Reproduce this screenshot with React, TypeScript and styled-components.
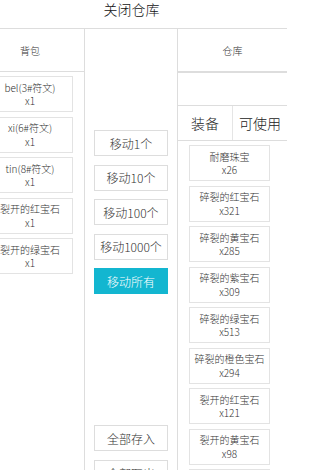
import styled, { createGlobalStyle } from 'styled-components';

const GlobalStyle = createGlobalStyle`
  body {
    margin: 0;
    overflow: hidden;
    background: #fff;
    color: #333;
    font-family: "Noto Sans CJK SC", "Noto Sans", sans-serif;
    font-weight: 300;
  }
`;

const Page = styled.div`
  width: 311px;
  margin-left: -24px;
`;

const TitleBar = styled.div`
  height: 28px;
  border-bottom: 1px solid #ddd;
  text-align: center;
  font-size: 14px;
  line-height: 18px;
  color: #111;
`;

const Columns = styled.div`
  display: grid;
  grid-template-columns: 109px 93px 109px;
  height: 470px;
`;

const Panel = styled.div<{ $divider?: boolean }>`
  display: flex;
  flex-direction: column;
  min-width: 0;
  overflow: hidden;
  border-right: ${(p) => (p.$divider ? '1px solid #ddd' : 'none')};
`;

const PanelHeader = styled.div`
  height: 42px;
  flex-shrink: 0;
  display: flex;
  align-items: center;
  justify-content: center;
  border-bottom: 1px solid #ddd;
  font-size: 10px;
`;

const SearchInput = styled.input`
  box-sizing: border-box;
  flex-shrink: 0;
  height: 34px;
  width: 100%;
  border: none;
  border-top: 1px solid #ddd;
  border-bottom: 1px solid #ddd;
  outline: none;
  padding: 0 6px;
`;

const TabRow = styled.div`
  display: flex;
  height: 34px;
  flex-shrink: 0;
  border-bottom: 1px solid #ddd;
`;

const Tab = styled.div<{ $divider?: boolean }>`
  flex: 1;
  display: flex;
  align-items: center;
  justify-content: center;
  font-size: 14px;
  color: #222;
  white-space: nowrap;
  border-right: ${(p) => (p.$divider ? '1px solid #e5e5e5' : 'none')};
`;

const ItemList = styled.div<{ $side: 'left' | 'right' }>`
  display: flex;
  flex-direction: column;
  gap: 4.5px;
  padding: 4px ${(p) => (p.$side === 'left' ? '11px' : '17px')} 0 11px;
`;

const ItemCard = styled.div`
  box-sizing: border-box;
  height: 36px;
  flex-shrink: 0;
  display: flex;
  flex-direction: column;
  align-items: center;
  justify-content: center;
  border: 1px solid #e3e3e3;
  font-size: 10px;
  line-height: 13.5px;
  color: #333;
  white-space: nowrap;
`;

const ButtonGroup = styled.div<{ $bottom?: boolean }>`
  display: flex;
  flex-direction: column;
  align-items: center;
  flex-shrink: 0;
  gap: ${(p) => (p.$bottom ? '9px' : '8.5px')};
  padding-top: ${(p) => (p.$bottom ? '0' : '101px')};
  padding-bottom: ${(p) => (p.$bottom ? '13px' : '0')};
  margin-top: ${(p) => (p.$bottom ? 'auto' : '0')};
`;

const ActionButton = styled.button<{ $primary?: boolean }>`
  box-sizing: border-box;
  width: 74px;
  height: 26px;
  padding: 0;
  border: 1px solid ${(p) => (p.$primary ? '#13b6d0' : '#ddd')};
  background: ${(p) => (p.$primary ? '#13b6d0' : '#fff')};
  color: ${(p) => (p.$primary ? '#fff' : '#333')};
  font-family: inherit;
  font-weight: inherit;
  font-size: 12px;
  white-space: nowrap;
  cursor: pointer;
`;

const bagItems = [
  { name: 'bel(3#符文)', count: 1 },
  { name: 'xi(6#符文)', count: 1 },
  { name: 'tin(8#符文)', count: 1 },
  { name: '裂开的红宝石', count: 1 },
  { name: '裂开的绿宝石', count: 1 },
];

const storeItems = [
  { name: '耐磨珠宝', count: 26 },
  { name: '碎裂的红宝石', count: 321 },
  { name: '碎裂的黄宝石', count: 285 },
  { name: '碎裂的紫宝石', count: 309 },
  { name: '碎裂的绿宝石', count: 513 },
  { name: '碎裂的橙色宝石', count: 294 },
  { name: '裂开的红宝石', count: 121 },
  { name: '裂开的黄宝石', count: 98 },
  { name: '裂开的紫宝石', count: 87 },
];

const moveAmounts = ['移动1个', '移动10个', '移动100个', '移动1000个'];

const App: React.FC = () => {
  return (
    <Page>
      <GlobalStyle />
      <TitleBar>关闭仓库</TitleBar>
      <Columns>
        <Panel $divider>
          <PanelHeader>背包</PanelHeader>
          <ItemList $side="left">
            {bagItems.map((item) => (
              <ItemCard key={item.name}>
                <span>{item.name}</span>
                <span>x{item.count}</span>
              </ItemCard>
            ))}
          </ItemList>
        </Panel>

        <Panel $divider>
          <ButtonGroup>
            {moveAmounts.map((label) => (
              <ActionButton key={label}>{label}</ActionButton>
            ))}
            <ActionButton $primary>移动所有</ActionButton>
          </ButtonGroup>
          <ButtonGroup $bottom>
            <ActionButton>全部存入</ActionButton>
            <ActionButton>全部取出</ActionButton>
          </ButtonGroup>
        </Panel>

        <Panel>
          <PanelHeader>仓库</PanelHeader>
          <SearchInput />
          <TabRow>
            <Tab $divider>装备</Tab>
            <Tab>可使用</Tab>
          </TabRow>
          <ItemList $side="right">
            {storeItems.map((item) => (
              <ItemCard key={item.name}>
                <span>{item.name}</span>
                <span>x{item.count}</span>
              </ItemCard>
            ))}
          </ItemList>
        </Panel>
      </Columns>
    </Page>
  );
};

export default App;
